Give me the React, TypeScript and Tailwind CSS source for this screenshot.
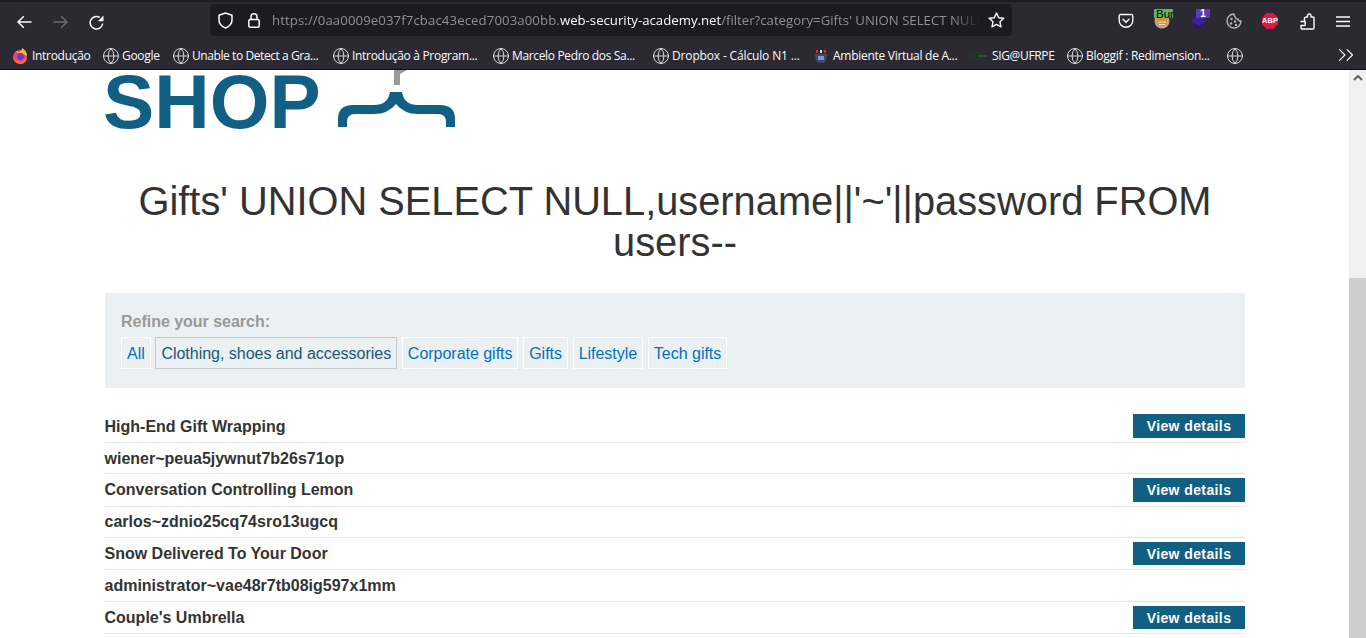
import React from "react";
import { Globe, ChevronsRight } from "lucide-react";

const bookmarks: { label: string; w: string; icon: "fx" | "globe" | "amb" | "sig"; tr: string }[] = [
  { label: "Introdução", w: "w-[91px]", icon: "fx", tr: "tracking-[-0.3px]" },
  { label: "Google", w: "w-[70px]", icon: "globe", tr: "tracking-[-0.3px]" },
  { label: "Unable to Detect a Gra...", w: "w-[160px]", icon: "globe", tr: "tracking-[-0.42px]" },
  { label: "Introdução à Program...", w: "w-[160px]", icon: "globe", tr: "tracking-[-0.3px]" },
  { label: "Marcelo Pedro dos Sa...", w: "w-[160px]", icon: "globe", tr: "tracking-[-0.35px]" },
  { label: "Dropbox - Cálculo N1 ...", w: "w-[160px]", icon: "globe", tr: "tracking-[-0.15px]" },
  { label: "Ambiente Virtual de A...", w: "w-[159px]", icon: "amb", tr: "tracking-[-0.28px]" },
  { label: "SIG@UFRPE", w: "w-[95px]", icon: "sig", tr: "tracking-[-0.35px]" },
  { label: "Bloggif : Redimension...", w: "w-[160px]", icon: "globe", tr: "tracking-[-0.26px]" },
];

function GlobeIcon() {
  return <Globe size={18} strokeWidth={1.2} className="text-[#e8e8ec] shrink-0 -ml-[1px] -mr-[2px]" />;
}

function BmIcon({ kind }: { kind: string }) {
  if (kind === "globe") return <GlobeIcon />;
  if (kind === "fx")
    return (
      <svg width="16" height="16" viewBox="0 0 16 16" className="shrink-0">
        <circle cx="8" cy="9" r="7" fill="#e8407a" />
        <path d="M3 4 C5 3 6 3 7 4 C8 3 10 3 10 0 C13 2 15 4 15 8 L11 6 Z" fill="#ffb52e" />
        <path d="M1 8 C1 13 5 16 9 16 C13 16 15 12 15 8 C14 12 10 14 6 13 C3 12 2 10 1 8Z" fill="#f3702b" />
        <circle cx="8.500" cy="8.500" r="3.400" fill="#6b3bc4" />
      </svg>
    );
  if (kind === "amb")
    return (
      <svg width="16" height="16" viewBox="0 0 16 16" className="shrink-0">
        <rect x="3" y="2" width="2" height="3" fill="#c8392f" />
        <rect x="7" y="2" width="2" height="3" fill="#d8d8e0" />
        <rect x="11" y="2" width="2" height="3" fill="#c8392f" />
        <path d="M2 6h12l-1 6 -2 3H5l-2-3Z" fill="#3c4a78" />
        <rect x="5" y="8" width="6" height="4" fill="#8a94b8" />
      </svg>
    );
  return (
    <svg width="16" height="16" viewBox="0 0 16 16" className="shrink-0">
      <path d="M1 8h14" stroke="#1d5a2a" strokeWidth="2" />
      <rect x="2" y="6" width="4" height="5" fill="#173a1e" />
    </svg>
  );
}

function Toolbar() {
  return (
    <div className="h-[70px] shrink-0 bg-[#2b2a33] border-b border-b-[#0c0c0d] flex flex-col text-[#fbfbfe] font-['Open_Sans','Noto_Sans',sans-serif]">
      <div className="h-[2px] bg-[#1c1b22]" />
      <div className="h-[40px] flex items-center">
        <div className="w-[210px] shrink-0 flex items-center pl-[17px] gap-[21px]">
          <svg width="15" height="14" viewBox="0 0 15 14" fill="none" stroke="#fbfbfe" strokeWidth="1.500">
            <path d="M1 7H14.500M6.800 1.200L1 7L6.800 12.800" />
          </svg>
          <svg width="15" height="14" viewBox="0 0 15 14" fill="none" stroke="#6d6c73" strokeWidth="1.500">
            <path d="M0.500 7H14M8.200 1.200L14 7L8.200 12.800" />
          </svg>
          <svg width="15" height="15" viewBox="0 0 15 15" fill="none">
            <path d="M13.700 8.500A6.300 6.300 0 1 1 10.800 2.400" stroke="#fbfbfe" strokeWidth="1.500" />
            <path d="M14.500 0.500V6.200H8.800Z" fill="#fbfbfe" />
          </svg>
        </div>
        <div className="w-[802px] h-[32px] -mt-[4px] bg-[#1c1b22] rounded-[4px] flex items-center pl-[8px] pr-[7px] shrink-0">
          <svg width="15" height="17" viewBox="0 0 15 17" fill="none" stroke="#fbfbfe" strokeWidth="1.500" className="shrink-0">
            <path d="M7.500 1L14 3.200V8C14 12 11 14.500 7.500 16C4 14.500 1 12 1 8V3.200Z" strokeLinejoin="round" />
          </svg>
          <svg width="12" height="15" viewBox="0 0 12 15" fill="none" stroke="#fbfbfe" strokeWidth="1.500" className="shrink-0 ml-[15px]">
            <rect x="0.800" y="6.500" width="10.400" height="7.700" rx="1.500" />
            <path d="M3 6.500V3.800a3 3 0 0 1 6 0V6.500" />
          </svg>
          <div className="ml-[12px] mt-[2px] w-[708px] text-[13.200px] whitespace-nowrap overflow-hidden text-[#8f8f94] [mask-image:linear-gradient(to_right,black_96%,transparent)]">
            <span className="tracking-[0.1px]">https://0aa0009e037f7cbac43eced7003a00bb.</span><span className="text-[#fbfbfe]">web-security-academy.net</span>/filter?category=Gifts' UNION SELECT NULL,username||'~'||password FROM users--
          </div>
          <svg width="17" height="16" viewBox="0 0 17 16" fill="none" stroke="#fbfbfe" strokeWidth="1.400" strokeLinejoin="round" className="shrink-0 ml-auto">
            <path d="M8.500 1L10.700 5.700L15.800 6.300L12 9.800L13 14.900L8.500 12.400L4 14.900L5 9.800L1.200 6.300L6.300 5.700Z" />
          </svg>
        </div>
        <div className="flex-1 relative h-full">
          <svg width="16" height="16" viewBox="0 0 16 16" className="absolute left-[106px] top-[11px]" fill="none" stroke="#fbfbfe" strokeWidth="1.400">
            <path d="M2.500 1.500h11a1.500 1.500 0 0 1 1.300 1.500v4.500a6.800 6.800 0 0 1-13.600 0V3a1.500 1.500 0 0 1 1.300-1.500Z" />
            <path d="M5 6.200l3 3 3-3" strokeLinecap="round" />
          </svg>
          <svg width="16" height="16" viewBox="0 0 16 16" className="absolute left-[142px] top-[11px]">
            <circle cx="8" cy="8" r="7.500" fill="#c9a27e" />
            <circle cx="8" cy="8" r="5" fill="#e08a3a" />
            <path d="M4 9h8M5 11.500h6" stroke="#f3e3cf" strokeWidth="1.200" />
          </svg>
          <div className="absolute left-[142px] top-[7px] h-[9px] w-[19px] bg-[#5cb85c] rounded-[1px] text-[11.500px] leading-[10px] text-black overflow-hidden pl-[2px] font-['Liberation_Sans',sans-serif]">
            Bur
          </div>
          <svg width="18" height="14" viewBox="0 0 18 14" className="absolute left-[178px] top-[13px]">
            <path d="M9 0l8.500 5.500L9 11 .5 5.500Z" fill="#3d1fa3" />
            <path d="M.5 7.500L9 14l8.500-6.500L9 11Z" fill="#2a1678" />
          </svg>
          <div className="absolute left-[184px] top-[7px] w-[14px] h-[9px] bg-[#5a3bb8] rounded-[1px] text-[10px] leading-[10px] text-center font-bold text-white font-['Liberation_Sans',sans-serif]">
            1
          </div>
          <svg width="16" height="16" viewBox="0 0 16 16" className="absolute left-[214px] top-[11px]" fill="none">
            <path d="M8 1a7 7 0 1 0 7 7c-1.500.3-3-.7-3-2-1.500.3-3-1-3-2.500C8 3 7.800 2 8 1Z" stroke="#b4b4ba" strokeWidth="1.400" />
            <circle cx="5.500" cy="6" r="1.200" fill="#b4b4ba" />
            <circle cx="5" cy="10.500" r="1.200" fill="#b4b4ba" />
            <circle cx="9" cy="8.500" r="1.200" fill="#b4b4ba" />
            <circle cx="10" cy="12" r="1.200" fill="#b4b4ba" />
          </svg>
          <div className="absolute left-[250px] top-[11px] w-[16px] h-[16px] bg-[#e8133f] text-white text-[7.500px] leading-[16px] text-center font-bold font-['Liberation_Sans',sans-serif] [clip-path:polygon(30%_0,70%_0,100%_30%,100%_70%,70%_100%,30%_100%,0_70%,0_30%)]">
            ABP
          </div>
          <svg width="15" height="17" viewBox="0 0 15 17" className="absolute left-[288px] top-[11px]" fill="none" stroke="#fbfbfe" strokeWidth="1.400" strokeLinejoin="round">
            <path d="M1 8.500h3c.8 0 1-.8.600-1.300C3.800 6 4.500 4 6.500 4H7.500V2.500C7.500 .5 11 .5 11 2.500V4h2a1 1 0 0 1 1 1v10a1 1 0 0 1-1 1H2a1 1 0 0 1-1-1v-2.500h3.500c1 0 1.300-4 0-4Z" />
          </svg>
          <svg width="14" height="11" viewBox="0 0 14 11" className="absolute left-[324px] top-[14px]" fill="none" stroke="#fbfbfe" strokeWidth="1.400">
            <path d="M0 1h14M0 5.500h14M0 10h14" />
          </svg>
        </div>
      </div>
      <div className="h-[27px] flex items-center pl-[12px] text-[12px] relative">
        {bookmarks.map((b) => (
          <div key={b.label} className={`${b.w} flex items-center gap-[4px] shrink-0 whitespace-nowrap`}>
            <BmIcon kind={b.icon} />
            <span className={b.tr}>{b.label}</span>
          </div>
        ))}
        <GlobeIcon />
        <ChevronsRight size={26} strokeWidth={1} className="absolute left-[1333px] top-[0px]" />
      </div>
    </div>
  );
}

function Logo() {
  return (
    <div className="h-[60px] flex items-start -ml-[2px]">
      <span className="block w-[235px] shrink-0 mt-[1px] text-[76.800px] leading-[60px] font-bold text-[#115f84]">SHOP</span>
      <svg width="118" height="58" viewBox="0 2 118 58">
        <path
          d="M0 59V51Q0 37 15 37H36Q50 37 52 24H64Q66 37 80 37H102Q117 37 117 51V59H108V54Q108 46 100 46H80Q66 46 58 36Q50 46 36 46H17Q9 46 9 54V59Z"
          fill="#115f84"
        />
        <path d="M56 2H69L62 6V17H56Z" fill="#999999" />
      </svg>
    </div>
  );
}

const filters = [
  { t: "All" },
  { t: "Clothing, shoes and accessories", active: true },
  { t: "Corporate gifts" },
  { t: "Gifts" },
  { t: "Lifestyle" },
  { t: "Tech gifts" },
];

const rows: { t: string; h: string; btn: string; text: string }[] = [
  { t: "High-End Gift Wrapping", h: "h-[33px]", btn: "h-[24px] -mt-[1px]", text: "mt-[2px]" },
  { t: "wiener~peua5jywnut7b26s71op", h: "h-[31px]", btn: "", text: "mt-[2px]" },
  { t: "Conversation Controlling Lemon", h: "h-[33px]", btn: "h-[24px] -mt-[1px]", text: "" },
  { t: "carlos~zdnio25cq74sro13ugcq", h: "h-[31px]", btn: "", text: "" },
  { t: "Snow Delivered To Your Door", h: "h-[32px]", btn: "h-[23px]", text: "" },
  { t: "administrator~vae48r7tb08ig597x1mm", h: "h-[32px]", btn: "", text: "" },
  { t: "Couple's Umbrella", h: "h-[32px]", btn: "h-[23px]", text: "" },
];

function Content() {
  return (
    <div className="flex-1 min-w-0 overflow-hidden pl-[105px] pr-[104px] font-['Liberation_Sans',sans-serif] text-[#333332]">
      <Logo />
      <h1 className="mt-[51px] text-[39.800px] leading-[41px] text-center font-normal">
        Gifts' UNION SELECT NULL,username||'~'||password FROM users--
      </h1>
      <section className="mt-[30px] h-[95px] bg-[#ebf0f2] px-[16px] pt-[20px]">
        <div className="text-[16px] leading-[18px] font-bold text-[#999999] tracking-[-0.02px]">Refine your search:</div>
        <div className="mt-[6px] flex gap-[4.700px] text-[16px] leading-[18px] tracking-[-0.02px]">
          {filters.map((f) =>
            f.active ? (
              <a key={f.t} className="h-[32px] pt-[1px] px-[5px] flex items-center border border-[#c5ccd1] text-[#185878]">{f.t}</a>
            ) : (
              <a key={f.t} className="h-[32px] pt-[1px] px-[5px] flex items-center border border-white text-[#0071bc]">{f.t}</a>
            )
          )}
        </div>
      </section>
      <div className="mt-[22px]">
        {rows.map((r) => (
          <div key={r.t} className={`${r.h} border-b border-b-[#e6e6e6] flex items-center justify-between text-[16px] font-bold text-[#333332]`}>
            <span className={`-ml-[0.500px] ${r.text}`}>{r.t}</span>
            {r.btn && (
              <a className={`${r.btn} w-[112px] pt-[2px] bg-[#115f84] text-white text-[14px] flex items-center justify-center tracking-[0.4px]`}>View details</a>
            )}
          </div>
        ))}
      </div>
    </div>
  );
}

export default function App() {
  return (
    <div className="h-[638px] w-[1366px] overflow-hidden flex flex-col bg-white">
      <Toolbar />
      <div className="flex-1 flex min-h-0">
        <Content />
        <div className="w-[17px] shrink-0 bg-[#f0f0f0] flex flex-col items-center">
          <svg width="10" height="6" viewBox="0 0 10 6" className="mt-[5px]" fill="none" stroke="#606060" strokeWidth="2"><path d="M1 5l4-4 4 4" /></svg>
          <div className="mt-[197px] w-full flex-1 bg-[#cdcdcd]" />
        </div>
      </div>
    </div>
  );
}
